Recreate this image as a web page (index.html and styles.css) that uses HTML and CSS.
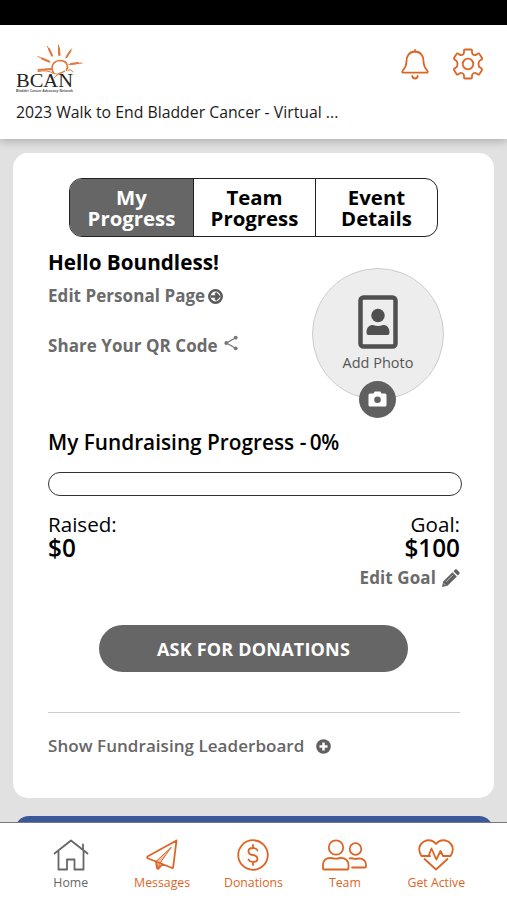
FILE: index.html
```html
<!DOCTYPE html>
<html lang="en">
<head>
<meta charset="utf-8">
<meta name="viewport" content="width=device-width, initial-scale=1">
<title>BCAN Walk</title>
<link rel="stylesheet" href="styles.css">
</head>
<body>
<div class="app">
  <div class="status"></div>
  <header class="header">
    <div class="header-top">
      <svg class="logo" viewBox="0 0 70 52" role="img" aria-label="BCAN">
        <g fill="none" stroke="#e0783f" stroke-linecap="round">
          <path stroke-width="1.7" d="M37.500 30C34 24 37 18 44 17.500C50 17.500 53 22 50.500 27"/>
          <path stroke-width="2" d="M33 6L36 12.500M43 5L43.500 12M54.500 8L50.500 14M26 15.500L33 18.500"/>
          <path stroke-width="1" d="M31.500 3.500L36 13M42.500 2V12M55.500 6L50 15M22 13.500L34 19"/>
          <path stroke-width="2" d="M55 21L62 20M22.500 27L35 26"/>
          <path stroke-width="1" d="M53 21.500L66 20M52 27Q55 25.500 57 29M22 28.500Q31 26.500 38 30.500Q43 32.500 49 28Q43 29 38 35"/>
        </g>
        <text class="logo-name" x="0" y="43.500" textLength="57" lengthAdjust="spacingAndGlyphs">BCAN</text>
        <text class="logo-tag" x="0" y="49" textLength="57" lengthAdjust="spacingAndGlyphs">Bladder Cancer Advocacy Network</text>
      </svg>
      <div class="actions">
        <svg width="28" height="32" viewBox="0 0 28 32" class="line">
          <path d="M14 2V4M14 3.500C8.500 3.500 5.500 8 5.500 13C5.500 18 4 20 1.800 22.500C.8 23.800 1.300 24.700 2.500 24.700H25.500C26.700 24.700 27.200 23.800 26.200 22.500C24 20 22.500 18 22.500 13C22.500 8 19.500 3.500 14 3.500Z"/>
          <path d="M11.300 28Q11.700 30.500 14 30.500T16.700 28"/>
        </svg>
        <svg width="32" height="32" viewBox="0 0 32 32" class="line">
          <circle cx="16" cy="16" r="5.300"/>
          <path d="M13 1.500H19Q20 1.500 20 2.500V4.500Q20 6.300 22 7Q23.300 7.500 24.500 6.500L26 5.500Q27 5 27.500 6L30 10Q30.500 11 29.500 11.500L28 12.500Q26.500 13.500 26.500 16T28 19.500L29.500 20.500Q30.500 21 30 22L27.500 26Q27 27 26 26.500L24.500 25.500Q23.300 24.500 22 25Q20 25.700 20 27.500V29.500Q20 30.500 19 30.500H13Q12 30.500 12 29.500V27.500Q12 25.700 10 25Q8.700 24.500 7.500 25.500L6 26.500Q5 27 4.500 26L2 22Q1.500 21 2.500 20.500L4 19.500Q5.500 18.500 5.500 16T4 12.500L2.500 11.500Q1.500 11 2 10L4.500 6Q5 5 6 5.500L7.500 6.500Q8.700 7.500 10 7Q12 6.300 12 4.500V2.500Q12 1.500 13 1.500Z"/>
        </svg>
      </div>
    </div>
    <div class="event">2023 Walk to End Bladder Cancer - Virtual ...</div>
  </header>

  <main class="main">
    <section class="card">
      <div class="tabs">
        <div class="tab active">My<br>Progress</div>
        <div class="tab">Team<br>Progress</div>
        <div class="tab">Event<br>Details</div>
      </div>
      <div class="profile">
        <div class="intro">
          <h1 class="hello">Hello Boundless!</h1>
          <a class="link edit-page"><span>Edit Personal Page</span>
            <svg width="15" height="15" viewBox="0 0 15 15"><g fill="none" stroke="#595959" stroke-width="2.500"><circle cx="7.500" cy="7.500" r="6.200"/><path d="M3 7.500H10.500M7.300 4L10.800 7.500L7.300 11"/></g></svg>
          </a>
          <a class="link share"><span>Share Your QR Code</span>
            <svg width="14" height="16" viewBox="0 0 14 16" fill="#777"><path d="M12 2.500L2.500 8L12 13.500" fill="none" stroke="#777" stroke-width="1.300"/><circle cx="11.700" cy="2.700" r="1.900"/><circle cx="2.300" cy="8" r="1.900"/><circle cx="11.700" cy="13.300" r="1.900"/></svg>
          </a>
        </div>
        <div class="photo">
          <svg width="40" height="54" viewBox="0 0 40 54" fill="#505050"><rect x="2.500" y="2.500" width="35" height="49" rx="3" fill="none" stroke="#505050" stroke-width="4.500"/><circle cx="20" cy="20.500" r="6.700"/><path d="M8.500 37.500C8.500 32.500 11 30 15 30Q20 32 25 30C29 30 31.500 32.500 31.500 37.500Q31.500 40 29.500 40H10.500Q8.500 40 8.500 37.500Z"/></svg>
          <span class="photo-label">Add Photo</span>
          <div class="camera"><svg width="19" height="16" viewBox="0 0 18 16"><path fill="#fff" d="M1.500 2.500H5L6.200.5H11.800L13 2.500H16.500Q18 2.500 18 4V14Q18 15.500 16.500 15.500H1.500Q0 15.500 0 14V4Q0 2.500 1.500 2.500Z"/><circle cx="9" cy="8.700" r="3.300" fill="#606060"/></svg></div>
        </div>
      </div>
      <h2 class="progress-title">My Fundraising Progress - <span class="percent">0%</span></h2>
      <div class="bar"></div>
      <div class="totals">
        <div><div class="label">Raised:</div><div class="amount">$0</div></div>
        <div class="goal"><div class="label">Goal:</div><div class="amount">$100</div></div>
      </div>
      <a class="link edit-goal"><span>Edit Goal</span>
        <svg width="18" height="18" viewBox="0 0 18 18"><path fill="#606060" d="M0 18L1.200 12.500L10.500 3.200L14.800 7.500L5.500 16.800ZM11.500 2.200L13.200.5Q14 0 14.800.6L17.400 3.200Q18 4 17.500 4.800L15.800 6.500Z"/><path d="M4 12.800L11 5.800M1.700 14.300L3.700 16.300" stroke="#ddd" stroke-width=".8"/></svg>
      </a>
      <button class="ask">ASK FOR DONATIONS</button>
      <div class="leader"><span>Show Fundraising Leaderboard</span>
        <svg width="15" height="15" viewBox="0 0 15 15"><circle cx="7.500" cy="7.500" r="7.300" fill="#606060"/><path d="M7.500 3.500V11.500M3.500 7.500H11.500" stroke="#fff" stroke-width="2.500"/></svg>
      </div>
    </section>
    <section class="next"></section>
  </main>

  <nav class="nav">
    <a class="item home"><svg width="36" height="32" viewBox="0 0 36 32" class="line"><path d="M1.500 14.500L18 1.500L34.500 14.500M5.500 12.500V30.500H14V20.500H21.500V30.500H30.500V12.500M30 10.500V5.500"/></svg><span>Home</span></a>
    <a class="item"><svg width="32" height="32" viewBox="0 0 32 32" class="line"><path d="M30.500 1.500L1.500 17.500Q.6 18.500 2 19.500L10 22.500L26 29Q27 29.200 27.200 28ZM10 22.500L11 29Q11.500 30.500 12.600 29.500L16.500 25"/><path d="M25 8.500L10 22.500L12 29L15.500 22Z" fill="#dc6526" fill-opacity=".4" stroke-width="1"/></svg><span>Messages</span></a>
    <a class="item"><svg width="32" height="32" viewBox="0 0 32 32" class="line"><circle cx="16" cy="16" r="14.800"/><path d="M20.500 11.500Q19.500 9 16 9C10 9 10 15 16 16C22 17 22 23 16 23Q12.500 23 11.500 20.500M16 6V9M16 23V26"/></svg><span>Donations</span></a>
    <a class="item"><svg width="45" height="32" viewBox="0 0 45 32" class="line"><circle cx="14" cy="8.500" r="7.200"/><circle cx="33.500" cy="10" r="5.800"/><path d="M2 30.500Q1 30.500 1 29.500V26.500C1 21.500 4 18.800 8.500 18.800Q14 20.500 18.500 18.800C23.500 18.800 26.500 21.500 26.500 26.500V29.500Q26.500 30.500 25.500 30.500ZM27.500 19.300Q30 19 33.500 20L37 19.300C41.500 19.300 44 22.500 44 26V27.500Q44 28.500 43 28.500H30"/></svg><span>Team</span></a>
    <a class="item"><svg width="36" height="32" viewBox="0 0 36 32" class="line"><path d="M12 17H3.500C-.5 11 1 5 6 2.500C10.500.3 15 1.500 18 5C21 1.500 25.500.3 30 2.500C35 5 36.500 11 32.500 17H25L22.500 12L18.300 20.500L13.500 9.500L10.500 17M6.500 20L18 30.500L29.500 20"/></svg><span>Get Active</span></a>
  </nav>
</div>
</body>
</html>
```
FILE: styles.css
```css
* { box-sizing: border-box; }
body { margin: 0; font-family: "Open Sans", "Noto Sans", sans-serif; color: #111; }
svg { display: block; flex: none; }
h1, h2 { margin: 0; }
.app { width: 507px; height: 900px; display: flex; flex-direction: column; overflow: hidden; background: #e1e1e1; }
.status { height: 25px; background: #000; flex: none; }
.header { height: 114px; flex: none; background: #fff; padding: 18px 23px 0 16px; box-shadow: 0 2px 9px rgba(0,0,0,.25); position: relative; }
.header-top { display: flex; justify-content: space-between; height: 52px; }
.logo { width: 70px; height: 52px; }
.logo-name { font: 19px "Liberation Serif", serif; fill: #222; }
.logo-tag { font: bold 3.500px "Liberation Sans", sans-serif; fill: #555; }
.actions { display: flex; gap: 23px; padding: 5px 0 0; height: 37px; }
.line { fill: none; stroke: #dc6526; stroke-width: 1.8; stroke-linejoin: round; stroke-linecap: round; }
.event { font-size: 15.800px; line-height: 22px; margin-top: 6px; white-space: nowrap; color: #1b1b1b; }
.main { flex: 1; min-height: 0; padding: 14px 13px 0; overflow: hidden; }
.card { height: 645px; background: #fff; border-radius: 15px; padding: 25px 35px 0; }
.tabs { display: grid; grid-template-columns: 123px 122px 1fr; width: 369px; height: 59px; margin-left: 21px; border: 1px solid #222; border-radius: 13px; overflow: hidden; }
.tab { font-size: 20.400px; font-weight: 700; line-height: 21px; text-align: center; padding-top: 8px; color: #000; }
.tab + .tab { border-left: 1px solid #222; }
.tab.active { background: #666; color: #fff; }
.profile { display: flex; justify-content: space-between; height: 181px; }
.intro { padding-top: 11px; }
.hello { font-size: 20.700px; line-height: 28px; color: #000; }
.link { display: flex; align-items: center; font-size: 17px; font-weight: 700; line-height: 24px; color: #6b6b6b; white-space: nowrap; }
.edit-page { margin-top: 8px; gap: 3px; letter-spacing: .05px; }
.share { margin-top: 26px; gap: 6px; letter-spacing: .05px; }
.share svg { margin-top: -6px; }
.photo { position: relative; width: 132px; height: 132px; margin: 31px 15px 0 0; border: 1px solid #ccc; border-radius: 50%; background: #ededed; display: flex; flex-direction: column; align-items: center; padding-top: 26px; }
.photo-label { font-size: 14.500px; line-height: 20px; margin-top: 4px; color: #555; }
.camera { position: absolute; left: 46px; top: 112px; width: 37px; height: 37px; border-radius: 50%; background: #606060; display: flex; align-items: center; justify-content: center; padding-bottom: 2px; }
.progress-title { font-size: 20.800px; font-weight: 600; line-height: 28px; margin-top: 10px; color: #000; white-space: nowrap; }
.percent { margin-left: -2px; letter-spacing: -.3px; }
.bar { width: 414px; height: 24px; border: 1.500px solid #333; border-radius: 12px; margin-top: 16px; }
.totals { display: flex; justify-content: space-between; margin-top: 16px; width: 412px; color: #000; }
.label { font-size: 20.600px; line-height: 25px; }
.amount { font-size: 24.300px; font-weight: 600; line-height: 22px; }
.goal { text-align: right; }
.edit-goal { width: 412px; justify-content: flex-end; gap: 6px; margin-top: 7px; letter-spacing: .1px; }
.ask { display: block; width: 309px; height: 47px; border: 0; border-radius: 24px; background: #666; color: #fff; font: 700 18px "Open Sans", sans-serif; letter-spacing: .2px; padding: 0; margin: 35px 0 0 51px; }
.leader { display: flex; align-items: center; gap: 12px; width: 412px; margin-top: 40px; border-top: 1px solid #ccc; padding-top: 20px; font-size: 17px; letter-spacing: .05px; font-weight: 600; line-height: 26px; color: #666; }
.next { height: 40px; margin: 18px 1px 0 2px; background: #3b5998; border-radius: 14px; }
.nav { height: 78px; flex: none; background: #fff; border-top: 1px solid #777; display: grid; grid-template-columns: repeat(5, 91.400px); justify-content: center; padding-top: 16px; }
.item { display: flex; flex-direction: column; align-items: center; font-size: 12.300px; line-height: 18px; gap: 3px; color: #dc6526; }
.home { color: #666; }
.home .line { stroke: #666; }
```
